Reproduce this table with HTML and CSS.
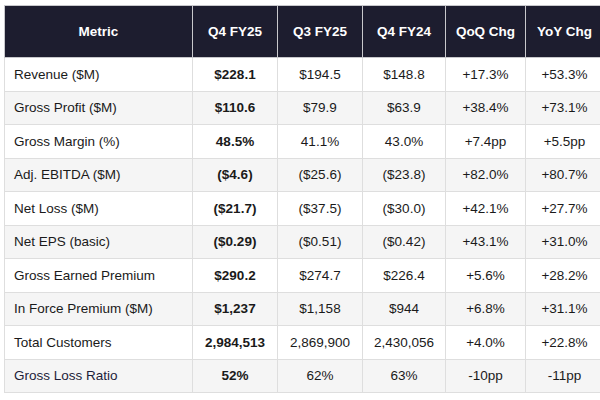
FILE: index.html
```html
<!DOCTYPE html>
<html>
<head>
<meta charset="utf-8">
<link rel="stylesheet" href="styles.css">
</head>
<body>
<div class="wrap">
<table class="metrics">
  <colgroup>
    <col class="c-metric"><col class="c-q4"><col class="c-q3"><col class="c-q4p"><col class="c-qoq"><col class="c-yoy">
  </colgroup>
  <thead>
    <tr><th>Metric</th><th>Q4 FY25</th><th>Q3 FY25</th><th>Q4 FY24</th><th>QoQ Chg</th><th>YoY Chg</th></tr>
  </thead>
  <tbody>
    <tr><td class="name">Revenue ($M)</td><td class="cur">$228.1</td><td>$194.5</td><td>$148.8</td><td>+17.3%</td><td>+53.3%</td></tr>
    <tr><td class="name">Gross Profit ($M)</td><td class="cur">$110.6</td><td>$79.9</td><td>$63.9</td><td>+38.4%</td><td>+73.1%</td></tr>
    <tr><td class="name">Gross Margin (%)</td><td class="cur">48.5%</td><td>41.1%</td><td>43.0%</td><td>+7.4pp</td><td>+5.5pp</td></tr>
    <tr><td class="name">Adj. EBITDA ($M)</td><td class="cur">($4.6)</td><td>($25.6)</td><td>($23.8)</td><td>+82.0%</td><td>+80.7%</td></tr>
    <tr><td class="name">Net Loss ($M)</td><td class="cur">($21.7)</td><td>($37.5)</td><td>($30.0)</td><td>+42.1%</td><td>+27.7%</td></tr>
    <tr><td class="name">Net EPS (basic)</td><td class="cur">($0.29)</td><td>($0.51)</td><td>($0.42)</td><td>+43.1%</td><td>+31.0%</td></tr>
    <tr><td class="name">Gross Earned Premium</td><td class="cur">$290.2</td><td>$274.7</td><td>$226.4</td><td>+5.6%</td><td>+28.2%</td></tr>
    <tr><td class="name">In Force Premium ($M)</td><td class="cur">$1,237</td><td>$1,158</td><td>$944</td><td>+6.8%</td><td>+31.1%</td></tr>
    <tr><td class="name">Total Customers</td><td class="cur">2,984,513</td><td>2,869,900</td><td>2,430,056</td><td>+4.0%</td><td>+22.8%</td></tr>
    <tr><td class="name navy">Gross Loss Ratio</td><td class="cur">52%</td><td>62%</td><td>63%</td><td>-10pp</td><td>-11pp</td></tr>
  </tbody>
</table>
</div>
</body>
</html>
```
FILE: styles.css
```css
html, body {
  margin: 0;
  padding: 0;
  background: #ffffff;
  overflow: hidden;
}
.wrap {
  box-sizing: border-box;
  width: 600px;
  height: 400px;
  padding: 5px 0 0 4px;
  overflow: hidden;
}
.metrics {
  border-collapse: collapse;
  table-layout: fixed;
  width: 599px;
  font-family: "Liberation Sans", Arial, sans-serif;
  font-size: 13.5px;
  color: #1a1a1a;
}
.c-metric { width: 188px; }
.c-q4 { width: 85px; }
.c-q3 { width: 85px; }
.c-q4p { width: 83px; }
.c-qoq { width: 80px; }
.c-yoy { width: 78px; }
.metrics th {
  background: #1d1d2f;
  color: #ffffff;
  font-weight: bold;
  text-align: center;
  height: 51px;
  padding: 0;
  border: 1px solid #c8c8cc;
}
.metrics td {
  height: 32.5px;
  padding: 0;
  text-align: center;
  border: 1px solid #dedede;
}
.metrics tbody tr:nth-child(even) td {
  background: #f5f5f5;
}
.metrics td.name {
  text-align: left;
  padding-left: 9px;
}
.metrics td.cur {
  font-weight: bold;
}
.metrics td.navy {
  color: #1d1d3a;
}
```
